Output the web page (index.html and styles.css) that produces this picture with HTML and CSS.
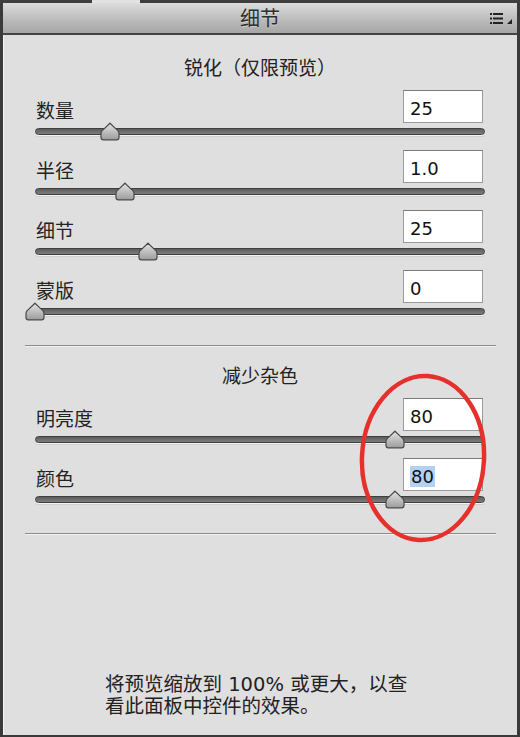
FILE: index.html
```html
<!DOCTYPE html>
<html lang="zh-CN">
<head>
    <meta charset="UTF-8">
    <meta name="viewport" content="width=device-width, initial-scale=1.0">
    <title>细节</title>
    <link rel="stylesheet" href="styles.css">
</head>
<body>
    <svg width="0" height="0" class="defs">
        <defs>
            <linearGradient id="thumb-fill" x1="0" y1="0" x2="0" y2="1">
                <stop offset="0" stop-color="#e4e4e4"/>
                <stop offset="1" stop-color="#9c9c9c"/>
            </linearGradient>
            <symbol id="thumb" viewBox="0 0 20 19">
                <path d="M10 1.2 L17.8 8.6 Q19 9.8 19 11.6 L19 15.4 Q19 17.8 16.6 17.8 L3.4 17.8 Q1 17.8 1 15.4 L1 11.6 Q1 9.8 2.2 8.6 Z" fill="url(#thumb-fill)" stroke="#4a4a4a" stroke-width="1.2"/>
            </symbol>
        </defs>
    </svg>

    <div class="panel">
        <div class="topline">
            <span class="edge"></span>
            <span class="tab"></span>
            <span class="edge grow"></span>
        </div>
        <div class="header">
            <span></span>
            <h1 class="title">细节</h1>
            <svg class="menu" width="22" height="12" viewBox="0 0 22 12">
                <rect x="0" y="0" width="2" height="2" fill="#222"/>
                <rect x="3" y="0" width="10" height="2" fill="#222"/>
                <rect x="0" y="4.5" width="2" height="2" fill="#222"/>
                <rect x="3" y="4.5" width="10" height="2" fill="#222"/>
                <rect x="0" y="9" width="2" height="2" fill="#222"/>
                <rect x="3" y="9" width="10" height="2" fill="#222"/>
                <polygon points="17,11 22,11 22,6" fill="#222"/>
            </svg>
        </div>

        <div class="content">
            <h2 class="group-title first">锐化（仅限预览）</h2>

            <div class="row">
                <div class="row-top"><span class="label">数量</span><div class="field">25</div></div>
                <div class="slider"><div class="track"></div><svg class="thumb" style="left:16.67%"><use href="#thumb"/></svg></div>
            </div>
            <div class="row">
                <div class="row-top"><span class="label">半径</span><div class="field">1.0</div></div>
                <div class="slider"><div class="track"></div><svg class="thumb" style="left:20%"><use href="#thumb"/></svg></div>
            </div>
            <div class="row">
                <div class="row-top"><span class="label">细节</span><div class="field">25</div></div>
                <div class="slider"><div class="track"></div><svg class="thumb" style="left:25%"><use href="#thumb"/></svg></div>
            </div>
            <div class="row">
                <div class="row-top"><span class="label">蒙版</span><div class="field">0</div></div>
                <div class="slider"><div class="track"></div><svg class="thumb" style="left:0%"><use href="#thumb"/></svg></div>
            </div>

            <div class="divider"></div>

            <h2 class="group-title">减少杂色</h2>

            <div class="row">
                <div class="row-top"><span class="label">明亮度</span><div class="field">80</div></div>
                <div class="slider"><div class="track"></div><svg class="thumb" style="left:80%"><use href="#thumb"/></svg></div>
            </div>
            <div class="row">
                <div class="row-top"><span class="label">颜色</span><div class="field"><span class="selected">80</span></div></div>
                <div class="slider"><div class="track"></div><svg class="thumb" style="left:80%"><use href="#thumb"/></svg></div>
            </div>

            <div class="divider"></div>

            <p class="note">将预览缩放到 100% 或更大，以查<br>看此面板中控件的效果。</p>
        </div>

        <!-- red annotation ring drawn over the noise sliders -->
        <svg class="ring" width="140" height="180" viewBox="0 0 140 180">
            <ellipse cx="70" cy="90" rx="61" ry="82" fill="none" stroke="#e6302c" stroke-width="4.5" transform="rotate(3 70 90)"/>
        </svg>
    </div>
</body>
</html>
```

FILE: styles.css
```css
* {
    box-sizing: border-box;
}
body {
    margin: 0;
    background-color: #dfdfdf;
    font-family: "Noto Sans CJK SC", "DejaVu Sans", sans-serif;
    color: #222;
}
.defs {
    position: absolute;
}
.panel {
    position: relative;
    width: 520px;
    height: 737px;
    display: flex;
    flex-direction: column;
    background-color: #dfdfdf;
    border-left: 3px solid #3a3a3a;
    border-right: 3px solid #3a3a3a;
    border-bottom: 2px solid #3a3a3a;
}
.topline {
    display: flex;
    height: 3px;
    margin: 0 -3px;
}
.edge {
    width: 92px;
    background-color: #3e3e3e;
}
.edge.grow {
    flex: 1;
}
.tab {
    width: 48px;
    background-color: #e2e2e2;
}
.header {
    display: grid;
    grid-template-columns: 1fr auto 1fr;
    align-items: center;
    height: 32px;
    background: linear-gradient(#dcdcdc, #b9b9b9 60%, #a6a6a6);
    border-bottom: 2px solid #444;
}
.title {
    margin: 0;
    font-size: 20px;
    font-weight: normal;
    line-height: 30px;
    color: #2e2e2e;
    text-shadow: 0 1px 0 rgba(255, 255, 255, 0.4);
}
.menu {
    justify-self: end;
    margin-right: 5px;
    margin-top: 1px;
}
.content {
    flex: 1;
    display: flex;
    flex-direction: column;
    padding: 0 32px;
    box-shadow: inset 1px 0 0 #f4f4f4;
}
.group-title {
    margin: 17px 0 11px;
    font-size: 19px;
    font-weight: normal;
    line-height: 24px;
    text-align: center;
    color: #222;
}
.group-title.first {
    margin-top: 20px;
}
.row {
    margin-bottom: 11px;
}
.row-top {
    display: flex;
    justify-content: space-between;
    align-items: center;
    height: 33px;
}
.label {
    font-size: 19px;
    line-height: 24px;
    padding-top: 6px;
    padding-left: 1px;
}
.field {
    width: 80px;
    height: 33px;
    margin-right: 2px;
    padding: 6px 0 0 6px;
    background-color: #fff;
    border: 1px solid #9a9a9a;
    border-top-color: #7a7a7a;
    font-family: "DejaVu Sans", sans-serif;
    font-size: 18px;
    line-height: 24px;
    color: #111;
}
.selected {
    background-color: #b3d2f2;
    padding: 0 1px;
}
.slider {
    position: relative;
    height: 16px;
    display: flex;
    align-items: center;
}
.track {
    width: 100%;
    height: 7px;
    border: 1px solid #3f3f3f;
    border-radius: 3.5px;
    background: linear-gradient(#5c5c5c, #7e7e7e);
    box-shadow: 0 1px 0 #f4f4f4, 0 2px 0 #cfcfcf;
}
.thumb {
    position: absolute;
    top: -1px;
    width: 20px;
    height: 19px;
    transform: translateX(-50%);
}
.divider {
    margin: 15px -11px 0 -10px;
    height: 1px;
    background-color: #8a8a8a;
    box-shadow: 0 1px 0 #f2f2f2;
}
.note {
    margin: auto 0 17px;
    align-self: center;
    width: 310px;
    white-space: nowrap;
    font-family: "DejaVu Sans", "Noto Sans CJK SC", sans-serif;
    font-size: 19.5px;
    line-height: 22px;
    color: #222;
}
.ring {
    position: absolute;
    left: 350px;
    top: 368px;
    pointer-events: none;
}
```
